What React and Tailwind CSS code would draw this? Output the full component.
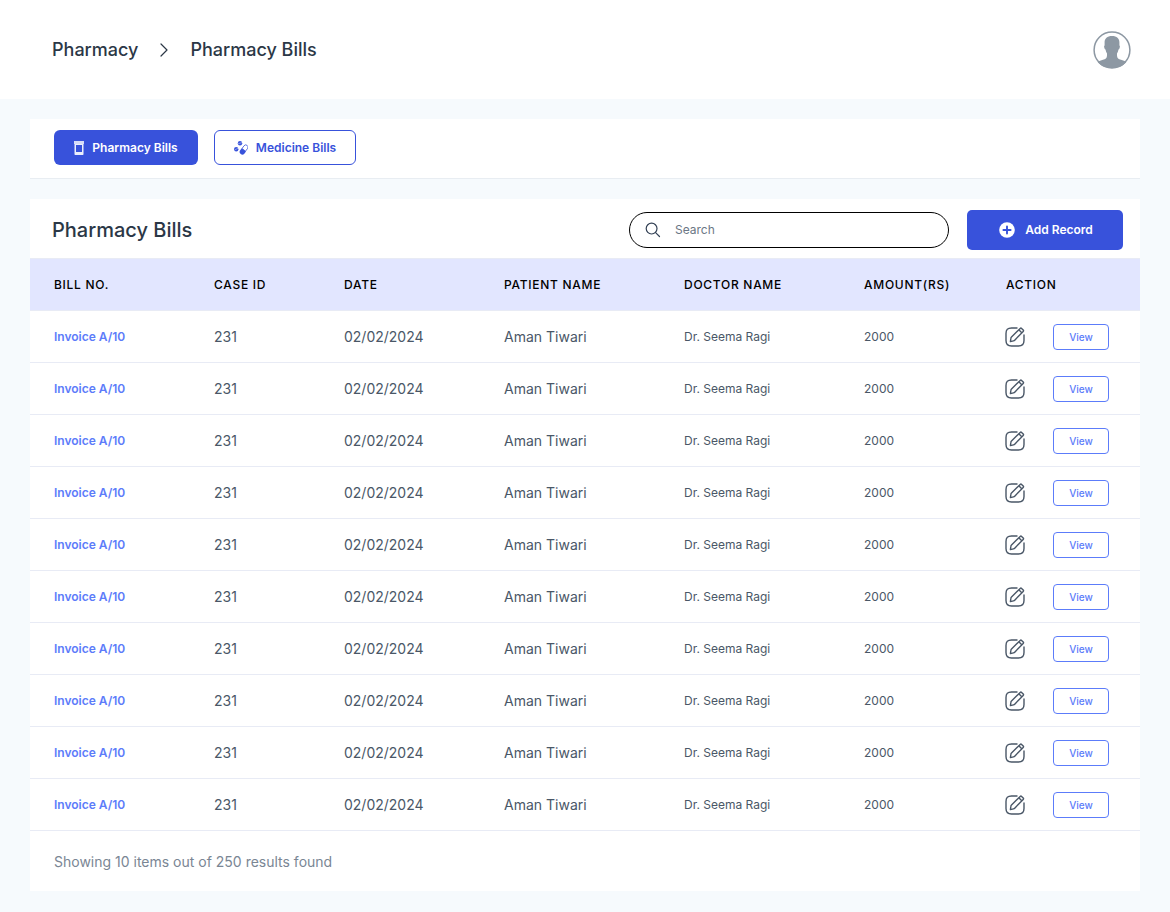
import { useState } from 'react'

const COLUMNS = [
  { label: 'Bill No.', width: 'w-[160px]' },
  { label: 'Case ID', width: 'w-[130px]' },
  { label: 'Date', width: 'w-[160px]' },
  { label: 'Patient Name', width: 'w-[180px]' },
  { label: 'Doctor Name', width: 'w-[180px]' },
  { label: 'Amount(Rs)', width: 'w-[142px]' },
  { label: 'Action', width: '' },
]

const BILLS = Array.from({ length: 10 }, (_, i) => ({
  id: i + 1,
  billNo: 'Invoice A/10',
  caseId: '231',
  date: '02/02/2024',
  patient: 'Aman Tiwari',
  doctor: 'Dr. Seema Ragi',
  amount: 2000,
}))

function ChevronIcon() {
  return (
    <svg width="10" height="14" viewBox="0 0 10 14" fill="none" stroke="currentColor" strokeWidth="1.2" strokeLinecap="round" strokeLinejoin="round" aria-hidden="true">
      <path d="M2 1l6 6-6 6" />
    </svg>
  )
}

function AvatarIcon() {
  return (
    <svg width="38" height="38" viewBox="0 0 38 38" fill="#8d98a3" aria-hidden="true">
      <circle cx="19" cy="19" r="17.9" fill="none" stroke="#8d98a3" strokeWidth="1.5" />
      <path d="M19 5c-4.800 0-7.400 2.600-7.400 6.500v3c-.5.300-.6 1-.4 1.800.2 1.200.6 2 1.300 2.300.3 1.600.8 2.800 1.500 3.900V28h10v-5.500c.7-1.100 1.200-2.300 1.500-3.900.7-.3 1.100-1.100 1.300-2.300.2-.8.1-1.500-.4-1.800v-3C26.400 7.600 23.800 5 19 5z" />
      <path d="M14 24.500c0 2.800-1.600 3.600-4 4.300-2 .6-4 1.300-5.400 2.300A18 18 0 0 0 19 37a18 18 0 0 0 14.400-5.900c-1.400-1-3.400-1.700-5.400-2.300-2.400-.7-4-1.500-4-4.300z" />
    </svg>
  )
}

function BottleIcon() {
  return (
    <svg width="10" height="14" viewBox="0 0 10 14" aria-hidden="true">
      <path d="M0 0h10v3H0z" fill="#fff" fillOpacity="0.8" />
      <path fillRule="evenodd" d="M.5 3h9v10.300a.7.7 0 0 1-.7.7H1.200a.7.7 0 0 1-.7-.7zM2 4v7h6V4z" fill="#fff" fillOpacity="0.9" />
    </svg>
  )
}

function PillsIcon() {
  return (
    <svg width="14" height="14" viewBox="0 0 14 14" fill="none" aria-hidden="true">
      <circle cx="6" cy="2.200" r="2.200" fill="currentColor" />
      <path d="M4 2.800l4-1.200" stroke="#fff" strokeWidth=".4" />
      <circle cx="2.200" cy="8.200" r="2.200" fill="currentColor" />
      <path d="M.4 9.100l3.600-1.800" stroke="#fff" strokeWidth=".4" />
      <path d="M8 7.500l2-2.700a2.200 2.200 0 0 1 3.500 2.700l-2 2.700z" stroke="currentColor" strokeWidth=".8" />
      <path d="M7.700 7.200l4.300 3.200-1.700 2.300a2.700 2.700 0 0 1-4.300-3.200z" fill="currentColor" />
    </svg>
  )
}

function SearchIcon() {
  return (
    <svg width="16" height="16" viewBox="0 0 16 16" fill="none" stroke="#334155" strokeWidth="1.2" strokeLinecap="round" aria-hidden="true">
      <circle cx="6.600" cy="6.600" r="5.400" />
      <path d="M10.600 10.600l3.900 3.900" />
    </svg>
  )
}

function PlusIcon() {
  return (
    <svg width="16" height="16" viewBox="0 0 16 16" aria-hidden="true">
      <circle cx="8" cy="8" r="7.800" fill="#fff" />
      <path d="M8 4.400v7.200M4.400 8h7.200" stroke="#3852db" strokeWidth="1.900" strokeLinecap="round" />
    </svg>
  )
}

function EditIcon() {
  return (
    <svg width="20" height="20" viewBox="0 0 20 20" fill="none" stroke="currentColor" strokeWidth="1.4" strokeLinecap="round" strokeLinejoin="round" aria-hidden="true">
      <path d="M12 1H6.500C2.500 1 1 2.500 1 6.500v7C1 17.500 2.500 19 6.500 19h7c4 0 5.500-1.500 5.500-5.500V8" />
      <path d="M5.400 14.600l.5-3.400a2 2 0 0 1 .6-1.200l8.700-8.600a1 1 0 0 1 1.400 0l1.600 1.600a1 1 0 0 1 0 1.400L9.700 13.200a2 2 0 0 1-1.200.7z" />
      <path d="M14.300 3.300l2 2" />
    </svg>
  )
}

function BillRow({ bill }) {
  return (
    <tr className="h-13 border-b border-[#e8ebf5] text-sm text-[#4a5767]">
      <td className="pl-6 text-xs">
        <a href="#invoice" className="font-semibold text-[#5c7cfa]">{bill.billNo}</a>
      </td>
      <td className="pl-6">{bill.caseId}</td>
      <td className="pl-6">{bill.date}</td>
      <td className="pl-6">{bill.patient}</td>
      <td className="pl-6 text-xs">{bill.doctor}</td>
      <td className="pl-6 text-xs">{bill.amount}</td>
      <td className="pl-[23px]">
        <div className="flex items-center gap-7">
          <button type="button" aria-label="Edit bill">
            <EditIcon />
          </button>
          <button type="button" className="w-14 h-[26px] pt-px rounded border border-[#5c7cfa] text-[10px] font-medium text-[#5c7cfa]">
            View
          </button>
        </div>
      </td>
    </tr>
  )
}

export default function App() {
  const [query, setQuery] = useState('')

  const rows = BILLS.filter((bill) =>
    `${bill.billNo} ${bill.patient} ${bill.doctor}`.toLowerCase().includes(query.toLowerCase())
  )

  return (
    <div className="min-h-screen bg-[#f6fafd] font-['Inter',sans-serif]">
      {/* Top bar */}
      <header className="flex items-center justify-between bg-white h-[99px] pl-13 pr-[39px]">
        <nav className="flex items-center gap-[21px] text-lg font-medium text-[#2b3746]">
          <a href="#pharmacy">Pharmacy</a>
          <ChevronIcon />
          <span>Pharmacy Bills</span>
        </nav>
        <button type="button" aria-label="Account">
          <AvatarIcon />
        </button>
      </header>

      <main className="px-[30px] py-5">
        {/* Bill type */}
        <section className="flex items-center gap-4 h-15 px-6 pb-0.5 bg-white border-b border-[#e8edf2]">
          <button type="button" className="flex items-center justify-center gap-2 w-36 h-[35px] rounded-md bg-[#3852db] text-xs font-semibold text-white">
            <BottleIcon />
            Pharmacy Bills
          </button>
          <button type="button" className="flex items-center justify-center gap-2 w-[142px] h-[35px] rounded-md border border-[#3852db] text-xs font-semibold text-[#3852db]">
            <PillsIcon />
            Medicine Bills
          </button>
        </section>

        <section className="mt-5 bg-white">
          <div className="flex items-center h-[59px] pt-0.5 pl-[22px] pr-[17px]">
            <h1 className="flex-1 text-xl font-medium text-[#2b3746]">Pharmacy Bills</h1>
            <label className="flex items-center gap-3.5 w-80 h-9 px-[15px] mr-[18px] rounded-full border border-black">
              <SearchIcon />
              <input
                type="text"
                value={query}
                onChange={(e) => setQuery(e.target.value)}
                placeholder="Search"
                aria-label="Search"
                className="flex-1 min-w-0 text-xs text-[#2b3746] placeholder:text-[#6b7785] outline-none"
              />
            </label>
            <button type="button" className="flex items-center justify-center gap-2.5 w-39 h-10 pl-0.5 rounded-[5px] bg-[#3852db] text-xs font-semibold text-white">
              <PlusIcon />
              Add Record
            </button>
          </div>

          <table className="w-full table-fixed text-left">
            <thead>
              <tr className="h-13 bg-[#e2e6ff] border-y border-[#e8ebf5]">
                {COLUMNS.map((col) => (
                  <th key={col.label} scope="col" className={`${col.width} pl-6 text-xs font-medium uppercase tracking-[0.06em] text-black`}>
                    {col.label}
                  </th>
                ))}
              </tr>
            </thead>
            <tbody>
              {rows.map((bill) => (
                <BillRow key={bill.id} bill={bill} />
              ))}
            </tbody>
          </table>

          <p className="flex items-center h-15 px-6 pt-0.5 text-sm text-[#7a8694]">
            Showing {rows.length} items out of 250 results found
          </p>
        </section>
      </main>
    </div>
  )
}
